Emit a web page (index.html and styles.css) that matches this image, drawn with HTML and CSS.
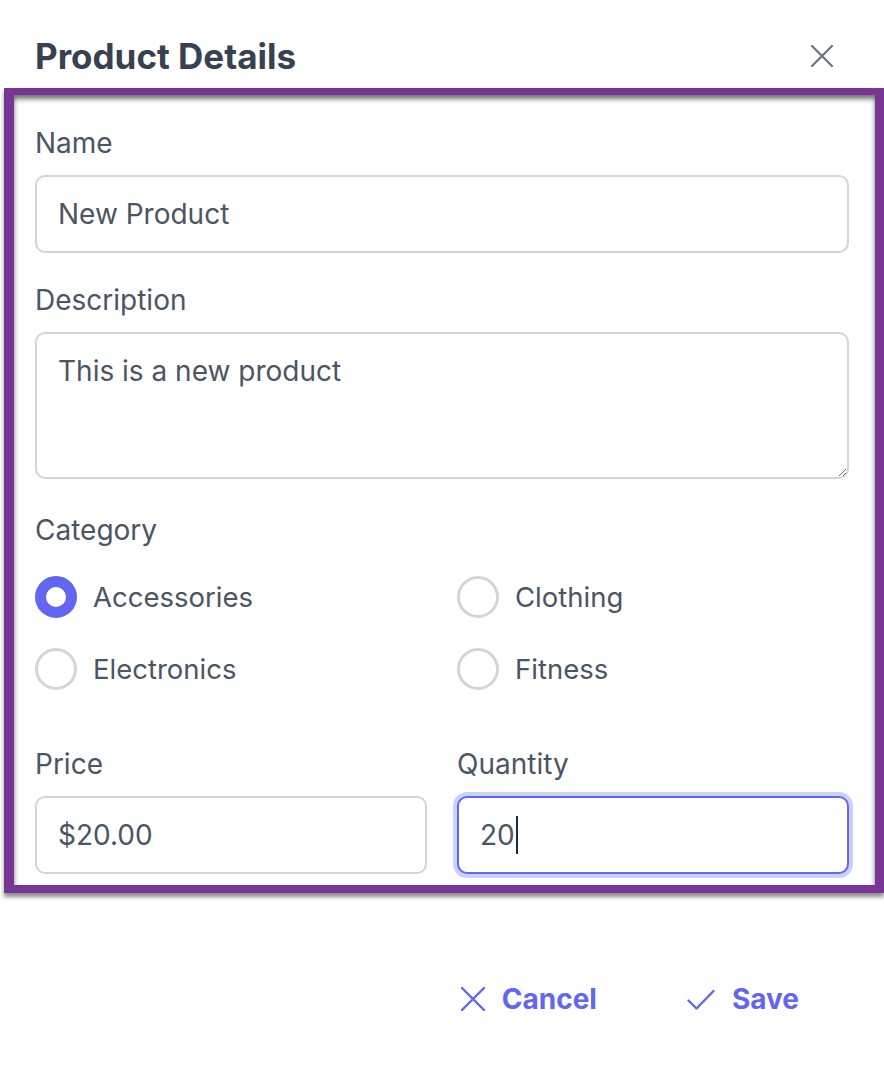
FILE: index.html
```html
<!DOCTYPE html>
<html lang="en">
<head>
  <meta charset="UTF-8">
  <meta name="viewport" content="width=device-width, initial-scale=1.0">
  <title>Product Details</title>
  <link rel="stylesheet" href="styles.css">
</head>
<body>

  <section class="modal">
    <header class="modal-header">
      <h1>Product Details</h1>
      <button type="button" class="btn-close" aria-label="Close">
        <svg width="24" height="24" viewBox="0 0 24 24" fill="none" stroke="currentColor" stroke-width="2.2" stroke-linecap="round">
          <path d="M2 2L22 22M22 2L2 22" />
        </svg>
      </button>
    </header>

    <div class="frame">
      <form class="form">
        <div class="field">
          <label for="name">Name</label>
          <input type="text" id="name" class="input" value="New Product">
        </div>

        <div class="field field-textarea">
          <label for="description">Description</label>
          <textarea id="description" class="input textarea">This is a new product</textarea>
        </div>

        <div class="field">
          <label>Category</label>
          <div class="radios">
            <label class="radio"><input type="radio" name="category" checked> Accessories</label>
            <label class="radio"><input type="radio" name="category"> Clothing</label>
            <label class="radio"><input type="radio" name="category"> Electronics</label>
            <label class="radio"><input type="radio" name="category"> Fitness</label>
          </div>
        </div>

        <div class="row">
          <div class="field">
            <label for="price">Price</label>
            <input type="text" id="price" class="input" value="$20.00">
          </div>
          <div class="field">
            <label>Quantity</label>
            <div class="input focused">20<span class="caret"></span></div>
          </div>
        </div>
      </form>
    </div>

    <footer class="modal-footer">
      <button type="button" class="btn-text">
        <svg width="24" height="24" viewBox="0 0 24 24" fill="none" stroke="currentColor" stroke-width="2.4" stroke-linecap="round">
          <path d="M1 1L23 23M23 1L1 23" />
        </svg>
        Cancel
      </button>
      <button type="button" class="btn-text">
        <svg width="28" height="21" viewBox="0 0 28 21" fill="none" stroke="currentColor" stroke-width="2.4" stroke-linecap="round" stroke-linejoin="round">
          <path d="M1.5 11.5L9.5 19.5L26.5 2" />
        </svg>
        Save
      </button>
    </footer>
  </section>

</body>
</html>
```

FILE: styles.css
```css
body {
  margin: 0;
  font-family: Inter, "Noto Sans", sans-serif;
  background-color: #ffffff;
  color: #4b5563;
  overflow: hidden;
}

.modal {
  width: 884px;
  height: 1072px;
}

.modal-header {
  display: flex;
  justify-content: space-between;
  align-items: center;
  height: 88px;
  padding: 24px 50px 0 35px;
  box-sizing: border-box;
}

.modal-header h1 {
  margin: 0;
  font-size: 35px;
  line-height: 44px;
  font-weight: 700;
  color: #374151;
}

.btn-close {
  border: none;
  background: none;
  padding: 0;
  color: #6b7280;
  display: flex;
}

.frame {
  margin-left: 4px;
  width: 880px;
  height: 805px;
  box-sizing: border-box;
  border: solid #773694;
  border-width: 7px 9px 8px 10px;
  box-shadow: 0 4px 4px rgba(0, 0, 0, 0.45), inset 0 4px 5px rgba(0, 0, 0, 0.55);
  overflow: hidden;
}

.form {
  padding: 32px 26px 0 21px;
}

.field {
  display: flex;
  flex-direction: column;
  margin-bottom: 31px;
}

.field-textarea {
  margin-bottom: 35px;
}

.field label {
  font-size: 28px;
  line-height: 32px;
  margin-bottom: 16px;
  color: #4b5563;
}

.input {
  box-sizing: border-box;
  height: 78px;
  width: 100%;
  padding: 0 21px;
  border: 2px solid #d1d5db;
  border-radius: 10px;
  font-family: inherit;
  font-size: 28px;
  line-height: 36px;
  color: #4b5563;
  background: #ffffff;
  outline: none;
}

.textarea {
  display: block;
  height: 147px;
  padding-top: 19px;
  resize: both;
}

.radios {
  display: grid;
  grid-template-columns: 1fr 1fr;
  column-gap: 30px;
  row-gap: 30px;
  margin-top: 14px;
  margin-bottom: 27px;
}

.field .radio {
  display: flex;
  align-items: center;
  gap: 16px;
  margin: 0;
  font-size: 27.5px;
  line-height: 42px;
}

.radio input {
  appearance: none;
  margin: 0;
  width: 42px;
  height: 42px;
  border: 3px solid #d1d5db;
  border-radius: 50%;
  box-sizing: border-box;
  background: #ffffff;
}

.radio input:checked {
  border: 11px solid #6366f1;
}

.row {
  display: grid;
  grid-template-columns: 1fr 1fr;
  column-gap: 30px;
}

.focused {
  display: flex;
  align-items: center;
  border-color: #6366f1;
  box-shadow: 0 0 0 4px #c7d2fe;
}

.caret {
  display: inline-block;
  width: 2px;
  height: 38px;
  background: #1f2937;
  margin-left: 1px;
}

.modal-footer {
  display: flex;
  justify-content: flex-end;
  gap: 90px;
  padding: 89px 85px 0 0;
}

.btn-text {
  display: flex;
  align-items: center;
  gap: 17px;
  border: none;
  background: none;
  padding: 0;
  font-family: inherit;
  font-size: 28px;
  font-weight: 700;
  color: #6366f1;
  cursor: pointer;
}
```
